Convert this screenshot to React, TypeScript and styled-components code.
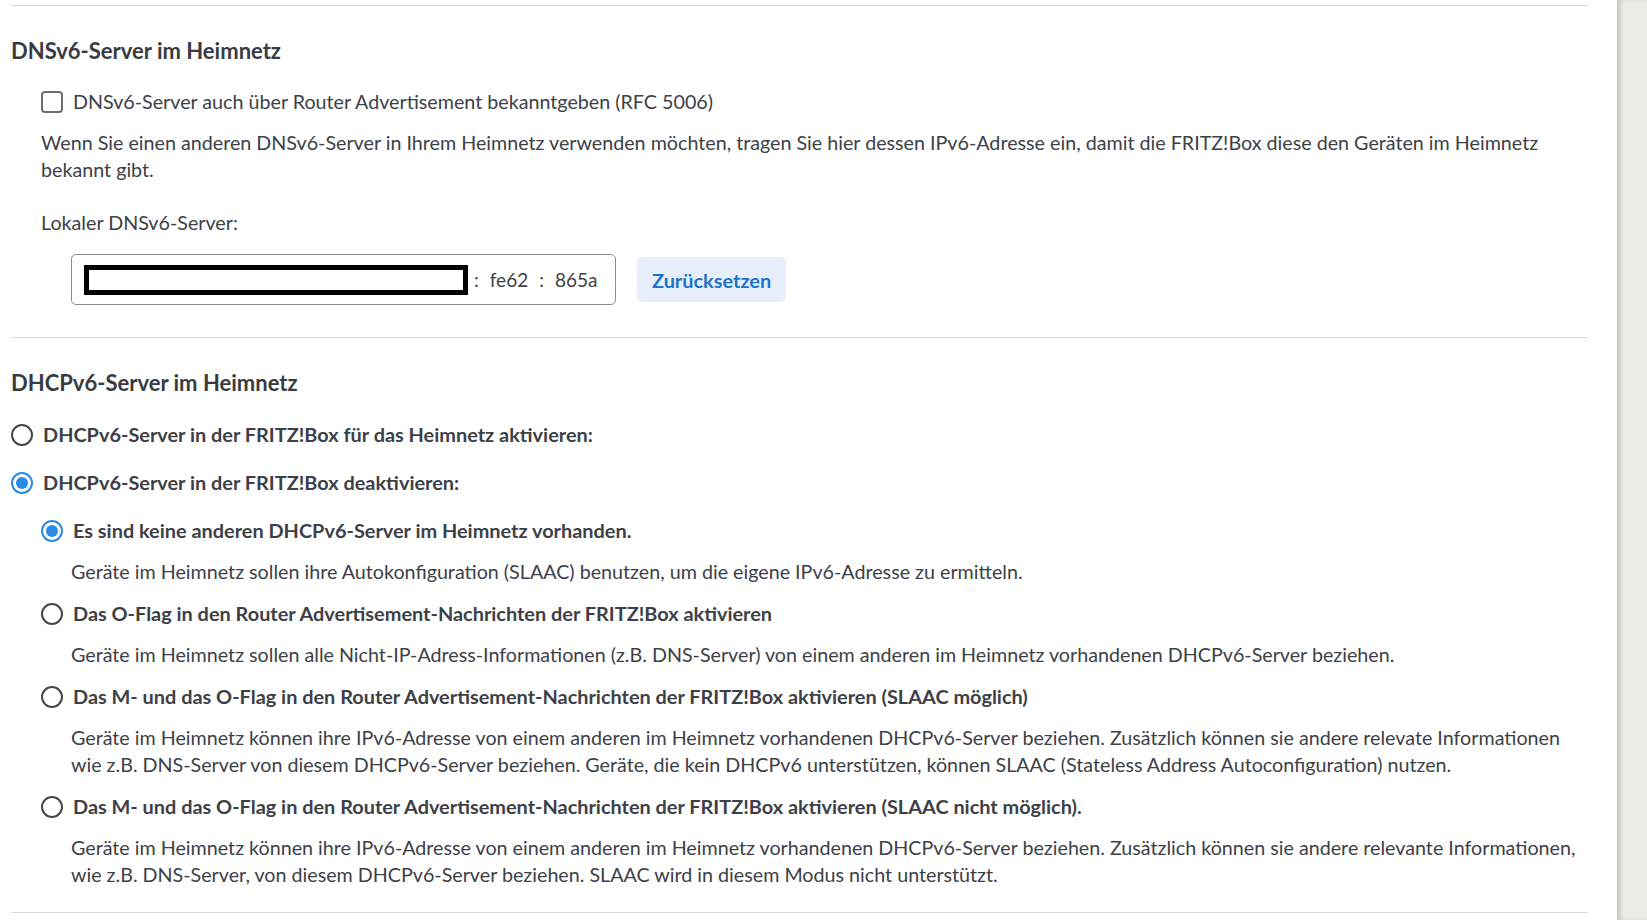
import styled, { createGlobalStyle } from "styled-components"

const GlobalStyle = createGlobalStyle`
    html, body {
        margin : 0;
        padding : 0;
        background : #ffffff;
    }
    body {
        font-family : Lato, "Noto Sans", sans-serif;
        color : #3d4147;
    }
`

const Page = styled.div`
    display : flex;
    flex-direction : row;
    width : 1647px;
    height : 920px;
    overflow : hidden;
`

const Main = styled.div`
    flex : 1;
    padding : 5px 29px 0 11px;
    background : #ffffff;
`

const SidePanel = styled.div`
    width : 30px;
    background : #ecebe6;
    box-shadow : inset 5px 0 5px -2px rgba(0, 0, 0, 0.18);
`

const Divider = styled.hr`
    margin : 0;
    border : none;
    border-top : 1px solid #d9d9d9;
    height : 0;
`

const Section = styled.section<{ $top: number; $bottom: number }>`
    display : flex;
    flex-direction : column;
    padding-top : ${p => p.$top}px;
    padding-bottom : ${p => p.$bottom}px;
`

const Heading = styled.h2`
    margin : 0;
    font-size : 22px;
    line-height : 28px;
    font-weight : 700;
    color : #383c42;
`

const Text = styled.p<{ $indent: number; $top: number }>`
    margin : ${p => p.$top}px 0 0 ${p => p.$indent}px;
    font-size : 19.7px;
    line-height : 27px;
    font-weight : 400;
`

const OptionRow = styled.label<{ $indent: number; $top: number }>`
    display : flex;
    align-items : center;
    gap : 10px;
    margin : ${p => p.$top}px 0 0 ${p => p.$indent}px;
    height : 27px;
    font-size : 19.7px;
    line-height : 27px;
    cursor : pointer;
`

const OptionLabel = styled.span<{ $bold?: boolean }>`
    font-weight : ${p => (p.$bold ? 700 : 400)};
    font-size : ${p => (p.$bold ? "19.9px" : "19.7px")};
`

const CheckBox = styled.span`
    box-sizing : border-box;
    width : 22px;
    height : 22px;
    border : 2px solid #6b6e72;
    border-radius : 4px;
    flex-shrink : 0;
`

const Radio = styled.span<{ $checked?: boolean }>`
    box-sizing : border-box;
    width : 22px;
    height : 22px;
    border-radius : 50%;
    flex-shrink : 0;
    border : 2px solid ${p => (p.$checked ? "#2b8ae6" : "#44474c")};
    display : flex;
    align-items : center;
    justify-content : center;

    &::after {
        content : "";
        width : 12px;
        height : 12px;
        border-radius : 50%;
        background : ${p => (p.$checked ? "#2b8ae6" : "transparent")};
    }
`

const InputRow = styled.div`
    display : flex;
    align-items : center;
    gap : 21px;
    margin : 18px 0 0 60px;
`

const AddressBox = styled.div`
    box-sizing : border-box;
    display : flex;
    align-items : center;
    width : 545px;
    height : 51px;
    padding : 0 0 0 12px;
    border : 1px solid #8a8d91;
    border-radius : 5px;
    font-size : 19px;
`

const Redacted = styled.div`
    box-sizing : border-box;
    width : 384px;
    height : 30px;
    border : 5px solid #000000;
`

const Sep = styled.span<{ $before: number }>`
    margin : 0 11px 0 ${p => p.$before}px;
`

const ResetButton = styled.button`
    height : 45px;
    padding : 0 15px;
    border : none;
    border-radius : 5px;
    background : #e6eff9;
    color : #1c73c9;
    font-family : Lato, "Noto Sans", sans-serif;
    font-size : 19.9px;
    font-weight : 700;
    cursor : pointer;
`

type Option = {
    label: string
    desc: string[]
    checked?: boolean
}

const options: Option[] = [
    {
        label: "Es sind keine anderen DHCPv6-Server im Heimnetz vorhanden.",
        desc: ["Geräte im Heimnetz sollen ihre Autokonfiguration (SLAAC) benutzen, um die eigene IPv6-Adresse zu ermitteln."],
        checked: true
    },
    {
        label: "Das O-Flag in den Router Advertisement-Nachrichten der FRITZ!Box aktivieren",
        desc: ["Geräte im Heimnetz sollen alle Nicht-IP-Adress-Informationen (z.B. DNS-Server) von einem anderen im Heimnetz vorhandenen DHCPv6-Server beziehen."]
    },
    {
        label: "Das M- und das O-Flag in den Router Advertisement-Nachrichten der FRITZ!Box aktivieren (SLAAC möglich)",
        desc: [
            "Geräte im Heimnetz können ihre IPv6-Adresse von einem anderen im Heimnetz vorhandenen DHCPv6-Server beziehen. Zusätzlich können sie andere relevate Informationen",
            "wie z.B. DNS-Server von diesem DHCPv6-Server beziehen. Geräte, die kein DHCPv6 unterstützen, können SLAAC (Stateless Address Autoconfiguration) nutzen."
        ]
    },
    {
        label: "Das M- und das O-Flag in den Router Advertisement-Nachrichten der FRITZ!Box aktivieren (SLAAC nicht möglich).",
        desc: [
            "Geräte im Heimnetz können ihre IPv6-Adresse von einem anderen im Heimnetz vorhandenen DHCPv6-Server beziehen. Zusätzlich können sie andere relevante Informationen,",
            "wie z.B. DNS-Server, von diesem DHCPv6-Server beziehen. SLAAC wird in diesem Modus nicht unterstützt."
        ]
    }
]

export default function App() {
    return (
        <>
            <GlobalStyle />
            <Page>
                <Main>
                    <Divider />
                    <Section $top={31} $bottom={32}>
                        <Heading>DNSv6-Server im Heimnetz</Heading>
                        <OptionRow $indent={30} $top={23}>
                            <CheckBox />
                            <OptionLabel>DNSv6-Server auch über Router Advertisement bekanntgeben (RFC 5006)</OptionLabel>
                        </OptionRow>
                        <Text $indent={30} $top={14}>
                            Wenn Sie einen anderen DNSv6-Server in Ihrem Heimnetz verwenden möchten, tragen Sie hier dessen IPv6-Adresse ein, damit die FRITZ!Box diese den Geräten im Heimnetz
                            <br />
                            bekannt gibt.
                        </Text>
                        <Text $indent={30} $top={26}>Lokaler DNSv6-Server:</Text>
                        <InputRow>
                            <AddressBox>
                                <Redacted />
                                <Sep $before={6}>:</Sep>
                                <span>fe62</span>
                                <Sep $before={11}>:</Sep>
                                <span>865a</span>
                            </AddressBox>
                            <ResetButton>Zurücksetzen</ResetButton>
                        </InputRow>
                    </Section>
                    <Divider />
                    <Section $top={31} $bottom={24}>
                        <Heading>DHCPv6-Server im Heimnetz</Heading>
                        <OptionRow $indent={0} $top={24}>
                            <Radio />
                            <OptionLabel $bold>DHCPv6-Server in der FRITZ!Box für das Heimnetz aktivieren:</OptionLabel>
                        </OptionRow>
                        <OptionRow $indent={0} $top={21}>
                            <Radio $checked />
                            <OptionLabel $bold>DHCPv6-Server in der FRITZ!Box deaktivieren:</OptionLabel>
                        </OptionRow>
                        {options.map((o, i) => (
                            <div key={i}>
                                <OptionRow $indent={30} $top={i === 0 ? 21 : 15}>
                                    <Radio $checked={o.checked} />
                                    <OptionLabel $bold>{o.label}</OptionLabel>
                                </OptionRow>
                                <Text $indent={60} $top={14}>
                                    {o.desc.map((line, j) => (
                                        <span key={j}>
                                            {line}
                                            {j < o.desc.length - 1 && <br />}
                                        </span>
                                    ))}
                                </Text>
                            </div>
                        ))}
                    </Section>
                    <Divider />
                </Main>
                <SidePanel />
            </Page>
        </>
    )
}
